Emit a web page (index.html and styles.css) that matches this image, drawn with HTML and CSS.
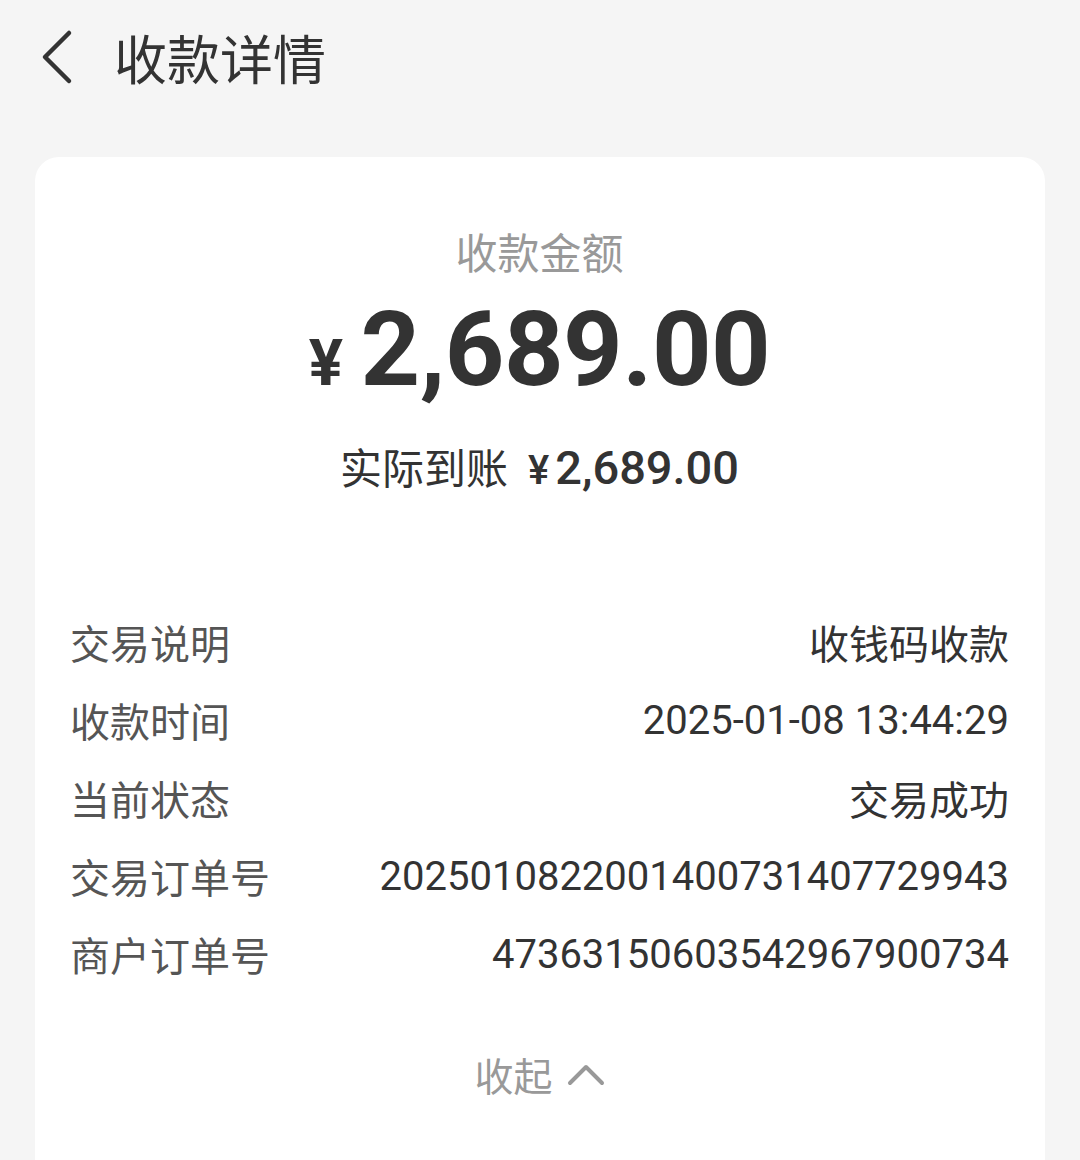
FILE: index.html
```html
<!DOCTYPE html>
<html lang="zh-CN">
<head>
    <meta charset="UTF-8">
    <meta name="viewport" content="width=device-width, initial-scale=1.0">
    <title>收款详情</title>
    <link rel="stylesheet" href="styles.css">
</head>
<body>

<div class="topbar">
    <svg class="back" width="36" height="56" viewBox="0 0 36 56">
        <path d="M31 4 L7 28 L31 52" fill="none" stroke="#333" stroke-width="4.5" stroke-linecap="round" stroke-linejoin="round"/>
    </svg>
    <h1 class="title">收款详情</h1>
</div>

<div class="card">
    <div class="amount-label">收款金额</div>
    <div class="amount"><span class="yen">¥</span>2,689.00</div>
    <div class="net">实际到账<span class="net-num"><span class="yen-s">¥</span>2,689.00</span></div>

    <div class="rows">
        <div class="row"><span class="key">交易说明</span><span class="val">收钱码收款</span></div>
        <div class="row"><span class="key">收款时间</span><span class="val">2025-01-08 13:44:29</span></div>
        <div class="row"><span class="key">当前状态</span><span class="val">交易成功</span></div>
        <div class="row"><span class="key">交易订单号</span><span class="val">2025010822001400731407729943</span></div>
        <div class="row"><span class="key">商户订单号</span><span class="val">47363150603542967900734</span></div>
    </div>

    <div class="fold">收起
        <svg width="38" height="24" viewBox="0 0 38 24">
            <path d="M3 21 L19 5 L35 21" fill="none" stroke="#999" stroke-width="4" stroke-linecap="round" stroke-linejoin="round"/>
        </svg>
    </div>
</div>

</body>
</html>
```

FILE: styles.css
```css
body {
    margin: 0;
    background-color: #f5f5f5;
    font-family: Roboto, "Noto Sans CJK SC", sans-serif;
    color: #333;
    height: 1160px;
    overflow: hidden;
}
.topbar {
    display: flex;
    align-items: center;
    height: 114px;
    padding-left: 38px;
}
.back {
    display: block;
}
.title {
    margin: 0 0 0 40px;
    font-family: "Noto Sans CJK SC", sans-serif;
    font-weight: 400;
    font-size: 53px;
    line-height: 1;
    color: #333;
}
.card {
    margin: 43px 35px 0;
    background-color: #fff;
    border-radius: 24px;
    padding: 68px 36px 120px 35px;
}
.amount-label {
    text-align: center;
    font-family: "Noto Sans CJK SC", sans-serif;
    font-size: 42px;
    line-height: 52px;
    color: #999;
}
.amount {
    text-align: center;
    font-size: 104px;
    font-weight: 700;
    line-height: 124px;
    margin-top: 11px;
    letter-spacing: -0.5px;
}
.yen {
    font-size: 64px;
    margin-right: 18px;
}
.net {
    text-align: center;
    font-family: "Noto Sans CJK SC", sans-serif;
    font-size: 42px;
    line-height: 56px;
    margin-top: 12px;
}
.net-num {
    font-family: Roboto, sans-serif;
    font-size: 47px;
    font-weight: 500;
    margin-left: 20px;
}
.yen-s {
    font-size: 40px;
    margin-right: 6px;
}
.rows {
    margin-top: 104px;
}
.row {
    display: flex;
    justify-content: space-between;
    align-items: center;
    height: 78px;
    font-size: 40px;
}
.key {
    font-family: "Noto Sans CJK SC", sans-serif;
    color: #555;
}
.val {
    color: #333;
}
.fold {
    display: flex;
    justify-content: center;
    align-items: center;
    gap: 14px;
    margin-top: 53px;
    font-family: "Noto Sans CJK SC", sans-serif;
    font-size: 39px;
    color: #999;
}
```
